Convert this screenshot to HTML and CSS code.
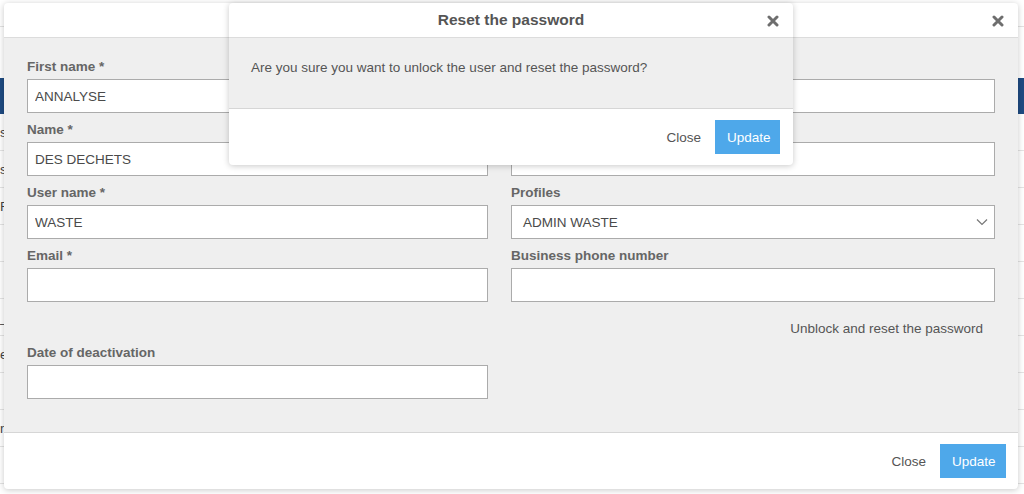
FILE: index.html
```html
<!DOCTYPE html>
<html lang="en">
	<head>
		<meta charset="UTF-8" />
		<meta name="viewport" content="width=device-width, initial-scale=1.0" />
		<title>Users</title>
		<link rel="stylesheet" href="styles.css">
	</head>
	<body>
		<!-- Page behind the dialogs -->
		<div class="page">
			<div class="topbar"></div>
			<table class="bg-table">
				<thead>
					<tr><th></th><th></th><th></th></tr>
				</thead>
				<tbody>
					<tr><td>s</td><td></td><td></td></tr>
					<tr><td>s</td><td></td><td></td></tr>
					<tr><td>R</td><td></td><td></td></tr>
					<tr><td></td><td></td><td></td></tr>
					<tr><td></td><td></td><td></td></tr>
					<tr><td>_</td><td></td><td></td></tr>
					<tr><td>e</td><td></td><td></td></tr>
					<tr><td></td><td></td><td></td></tr>
					<tr><td>n</td><td></td><td></td></tr>
					<tr><td></td><td></td><td></td></tr>
				</tbody>
			</table>
		</div>

		<!-- Edit user dialog -->
		<div class="modal modal-user">
			<div class="modal-header">
				<h4 class="modal-title"></h4>
				<button class="modal-close" aria-label="Close">
					<svg width="12" height="12" viewBox="0 0 12 12"><path d="M2 2L10 10M10 2L2 10" stroke="#6e6e6e" stroke-width="3" stroke-linecap="round"/></svg>
				</button>
			</div>
			<div class="modal-body">
				<div class="form-grid">
					<div class="field">
						<label>First name *</label>
						<input type="text" value="ANNALYSE">
					</div>
					<div class="field">
						<label></label>
						<input type="text">
					</div>
					<div class="field">
						<label>Name *</label>
						<input type="text" value="DES DECHETS">
					</div>
					<div class="field">
						<label></label>
						<input type="text">
					</div>
					<div class="field">
						<label>User name *</label>
						<input type="text" value="WASTE">
					</div>
					<div class="field">
						<label>Profiles</label>
						<div class="select">
							<span>ADMIN WASTE</span>
							<svg width="12" height="8" viewBox="0 0 12 8"><path d="M1 1.5L6 6.5L11 1.5" fill="none" stroke="#777" stroke-width="1.2"/></svg>
						</div>
					</div>
					<div class="field">
						<label>Email *</label>
						<input type="text">
					</div>
					<div class="field">
						<label>Business phone number</label>
						<input type="text">
					</div>
					<div></div>
					<div class="unblock">Unblock and reset the password</div>
					<div class="field">
						<label>Date of deactivation</label>
						<input type="text">
					</div>
				</div>
			</div>
			<div class="modal-footer">
				<button class="btn btn-link">Close</button>
				<button class="btn btn-primary">Update</button>
			</div>
		</div>

		<!-- Confirmation dialog -->
		<div class="modal modal-confirm">
			<div class="modal-header">
				<h4 class="modal-title">Reset the password</h4>
				<button class="modal-close" aria-label="Close">
					<svg width="12" height="12" viewBox="0 0 12 12"><path d="M2 2L10 10M10 2L2 10" stroke="#6e6e6e" stroke-width="3" stroke-linecap="round"/></svg>
				</button>
			</div>
			<div class="modal-body confirm-body">
				Are you sure you want to unlock the user and reset the password?
			</div>
			<div class="modal-footer">
				<button class="btn btn-link">Close</button>
				<button class="btn btn-primary">Update</button>
			</div>
		</div>
	</body>
</html>
```

FILE: styles.css
```css
body {
	font-family: 'Liberation Sans', Arial, sans-serif;
	font-size: 13.5px;
	margin: 0;
	padding: 0;
	background: #fff;
	color: #555;
	overflow: hidden;
}

/* background page */
.page {
	height: 494px;
}
.topbar {
	height: 26px;
	border-bottom: 1px solid #e2e2e2;
	margin-bottom: 51px;
}
.bg-table {
	border-collapse: collapse;
	width: 100%;
}
.bg-table th {
	background: #1e4b82;
	height: 36px;
	padding: 0;
}
.bg-table td {
	height: 36px;
	padding: 0;
	border-bottom: 1px solid #e4e4e4;
	color: #444;
}
.bg-table td:first-child {
	width: 8px;
	text-align: left;
}

/* dialogs */
.modal {
	position: absolute;
	top: 3px;
	background: #fff;
	border-radius: 4px;
	box-shadow: 0 1px 6px rgba(0, 0, 0, 0.22);
	overflow: hidden;
}
.modal-user {
	left: 4px;
	width: 1014px;
}
.modal-confirm {
	left: 229px;
	width: 564px;
}
.modal-header {
	position: relative;
	height: 34px;
	border-bottom: 1px solid #dcdcdc;
	display: flex;
	align-items: center;
	justify-content: center;
}
.modal-title {
	margin: 0;
	font-size: 15.5px;
	font-weight: bold;
	color: #555;
}
.modal-close {
	position: absolute;
	right: 14px;
	top: 12px;
	width: 12px;
	height: 12px;
	padding: 0;
	border: none;
	background: none;
	display: flex;
}
.modal-body {
	background: #efefef;
	padding: 21px 23px 24px;
}
.modal-footer {
	border-top: 1px solid #d6d6d6;
	height: 56px;
	padding: 0 12px 0 0;
	display: flex;
	align-items: center;
	justify-content: flex-end;
	gap: 2px;
}
.modal-confirm .modal-footer {
	padding-right: 13px;
}

/* form */
.form-grid {
	display: grid;
	grid-template-columns: 461px 1fr;
	column-gap: 23px;
}
.field {
	display: flex;
	flex-direction: column;
	margin-bottom: 9px;
}
.field label {
	font-weight: bold;
	color: #666;
	height: 16px;
	line-height: 16px;
	margin-bottom: 4px;
}
.field input,
.select {
	box-sizing: border-box;
	height: 34px;
	border: 1px solid #ababab;
	background: #fff;
	font-family: inherit;
	font-size: 13.5px;
	color: #4a4a4a;
	padding: 0 7px;
	margin: 0;
	border-radius: 0;
}
.select {
	display: flex;
	align-items: center;
	justify-content: space-between;
	padding: 0 6px 0 11px;
}
.unblock {
	text-align: right;
	padding-right: 12px;
	margin: 10px 0 8px;
	line-height: 16px;
	color: #555;
}

/* buttons */
.btn {
	font-family: inherit;
	font-size: 13.5px;
	height: 34px;
	border: none;
	border-radius: 0;
	padding: 0 12px;
	cursor: pointer;
}
.btn-link {
	background: none;
	color: #555;
}
.btn-primary {
	background: #4ea8ea;
	color: #fff;
	width: 66px;
}
.modal-confirm .btn-primary {
	width: 65px;
}
.confirm-body {
	padding: 22px 22px 32px;
	line-height: 16px;
}
```
